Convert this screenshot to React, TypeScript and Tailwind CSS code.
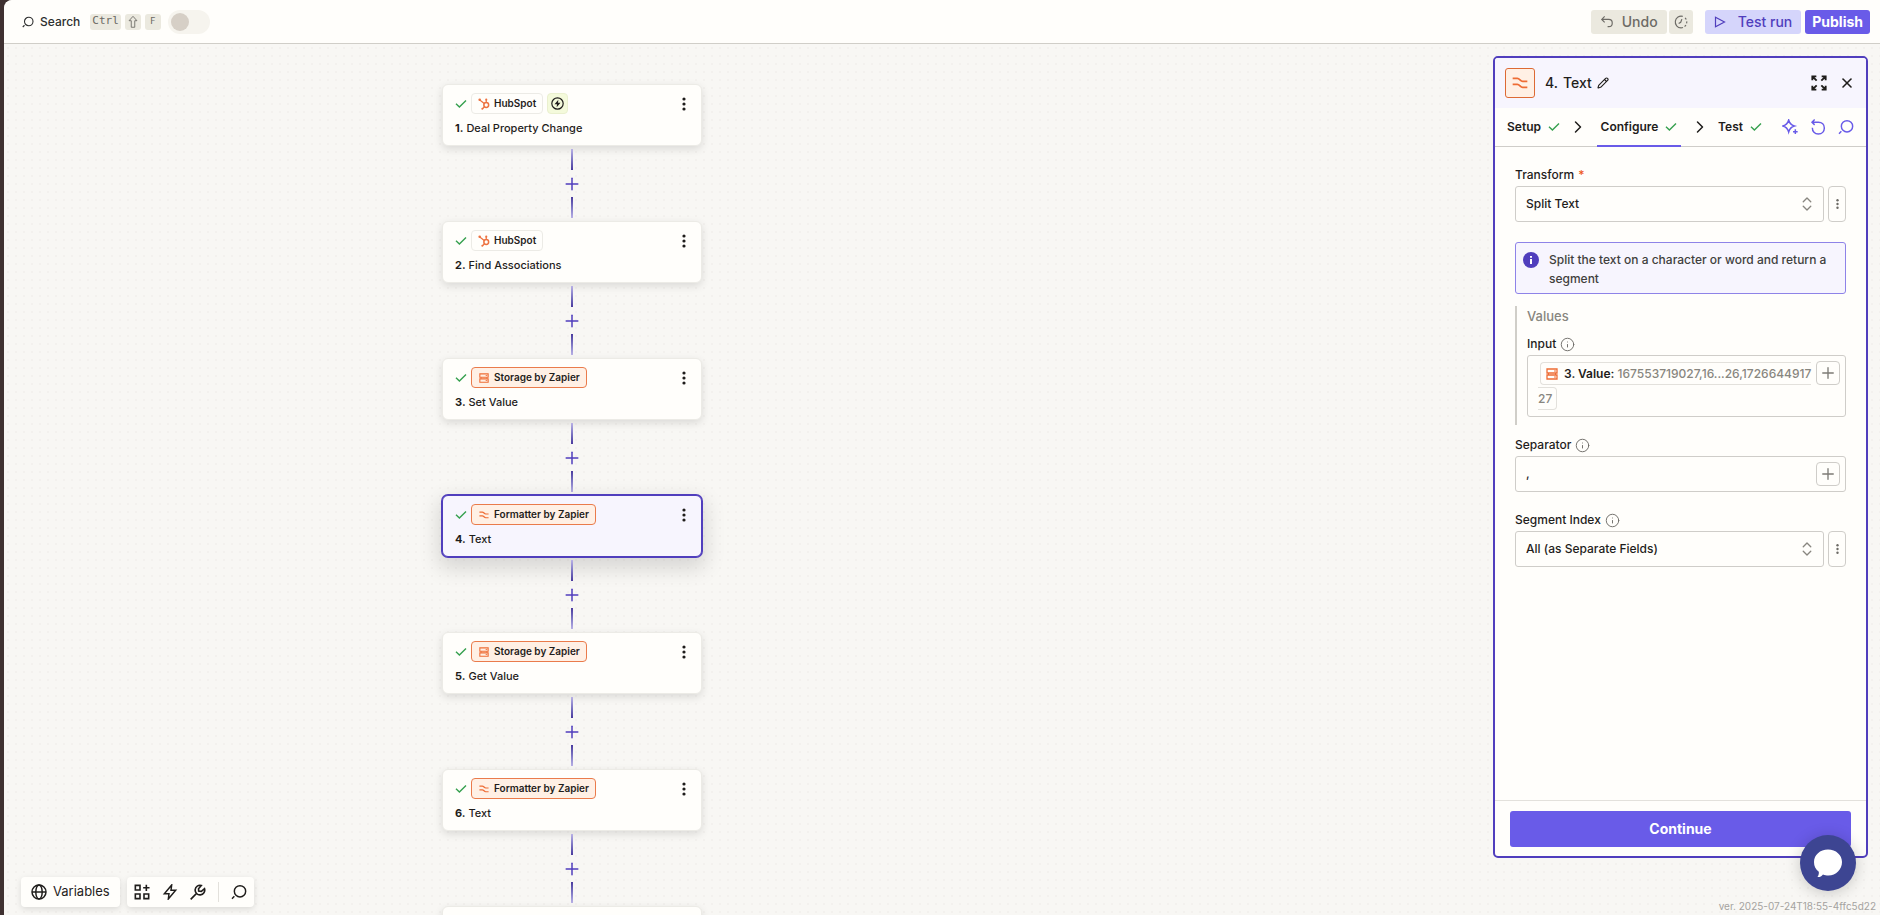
import { ChevronRight, ChevronsUpDown, Info, Pencil, Plus, X } from "lucide-react";

type App = "hubspot" | "storage" | "formatter" | "code";

interface Step {
  app: App;
  title: string;
  trigger?: boolean;
  selected?: boolean;
}

const steps: Step[] = [
  { app: "hubspot", title: "Deal Property Change", trigger: true },
  { app: "hubspot", title: "Find Associations" },
  { app: "storage", title: "Set Value" },
  { app: "formatter", title: "Text", selected: true },
  { app: "storage", title: "Get Value" },
  { app: "formatter", title: "Text" },
  { app: "code", title: "Run Javascript" },
];

const appNames: Record<App, string> = {
  hubspot: "HubSpot",
  storage: "Storage by Zapier",
  formatter: "Formatter by Zapier",
  code: "Code by Zapier",
};

interface IconProps {
  className?: string;
}

function CheckIcon({ className }: IconProps) {
  return (
    <svg viewBox="0 0 12 12" fill="none" stroke="#36a04f" strokeWidth="1.4" className={className} aria-hidden="true">
      <path d="M1 5.7 L4.4 9.1 L11 2.5" />
    </svg>
  );
}

function SearchIcon({ className }: IconProps) {
  return (
    <svg viewBox="0 0 24 24" fill="none" stroke="currentColor" strokeWidth="2.2" className={className} aria-hidden="true">
      <circle cx="13.5" cy="11" r="8.5" />
      <path d="M5 18.5 L1.5 22" />
    </svg>
  );
}

function HubSpotIcon({ className }: IconProps) {
  return (
    <svg viewBox="0 0 24 24" fill="none" stroke="currentColor" strokeWidth="2.4" className={className} aria-hidden="true">
      <circle cx="16.5" cy="14" r="4.8" strokeWidth="3" />
      <path d="M16.5 9 V4 M12.5 11 L3.5 4 M13 17.5 L9 21.5" />
      <circle cx="16.5" cy="3.4" r="2.2" fill="currentColor" stroke="none" />
      <circle cx="3.4" cy="3.4" r="2.6" fill="currentColor" stroke="none" />
      <circle cx="8.6" cy="21.6" r="2" fill="currentColor" stroke="none" />
    </svg>
  );
}

function StorageIcon({ className }: IconProps) {
  return (
    <svg viewBox="0 0 24 24" fill="none" stroke="currentColor" strokeWidth="2.6" className={className} aria-hidden="true">
      <path d="M2 2 H22 V10 H2 Z M2 14 H22 V22 H2 Z" />
      <path d="M16 6 H20 M16 18 H20 M5 10 V14 M19 10 V14" strokeWidth="2" />
    </svg>
  );
}

function FormatterIcon({ className }: IconProps) {
  return (
    <svg viewBox="0 0 24 24" fill="none" stroke="currentColor" strokeWidth="2.8" className={className} aria-hidden="true">
      <path d="M1 5 H8 C11.5 5 12.5 9.5 16 9.5 H23" />
      <path d="M1 14 H8 C11.5 14 12.5 18.5 16 18.5 H23" />
    </svg>
  );
}

function CodeIcon({ className }: IconProps) {
  return (
    <svg viewBox="0 0 24 24" fill="none" stroke="currentColor" strokeWidth="2.6" className={className} aria-hidden="true">
      <path d="M7 5 L1.5 12 L7 19 M17 5 L22.5 12 L17 19 M14 3 L10 21" />
    </svg>
  );
}

function AppIcon({ app, className }: IconProps & { app: App }) {
  if (app === "hubspot") return <HubSpotIcon className={className} />;
  if (app === "storage") return <StorageIcon className={className} />;
  if (app === "code") return <CodeIcon className={className} />;
  return <FormatterIcon className={className} />;
}

function DotsIcon({ className }: IconProps) {
  return (
    <svg viewBox="0 0 4 14" fill="currentColor" className={className} aria-hidden="true">
      <circle cx="2" cy="2" r="1.6" />
      <circle cx="2" cy="7" r="1.6" />
      <circle cx="2" cy="12" r="1.6" />
    </svg>
  );
}

function StepCard({ step, index }: { step: Step; index: number }) {
  return (
    <article
      className={
        step.selected
          ? "h-[62px] w-[260px] rounded-md border border-[#503ebd] bg-[#f7f5fe] pt-2 pr-[11px] pl-3 shadow-[0_8px_20px_4px_rgba(0,0,0,0.13)] ring-1 ring-[#503ebd]"
          : "h-[62px] w-[260px] rounded-md border border-[#ecebe6] bg-[#fffefb] pt-2 pr-[11px] pl-3 shadow-[0_3px_8px_rgba(0,0,0,0.12)]"
      }
    >
      <div className="flex items-center">
        <CheckIcon className="mr-1 size-3" />
        <span
          className={
            step.app === "hubspot"
              ? "flex h-[21px] items-center gap-1 rounded border border-[#ecebe6] px-1.5 text-[10px] font-semibold"
              : "flex h-[21px] items-center gap-1 rounded border border-[#ea7b4b] bg-[#fff0e5] px-1.5 text-[10px] font-semibold"
          }
        >
          <AppIcon app={step.app} className={step.app === "hubspot" ? "size-3 text-[#ed7240]" : "size-3 p-px text-[#ee6c35]"} />
          {appNames[step.app]}
        </span>
        {step.trigger && (
          <span className="ml-1 flex size-[21px] items-center justify-center rounded border border-[#eaf0cf] bg-[#f4fadb]">
            <svg viewBox="0 0 24 24" fill="none" className="size-[13px]" aria-hidden="true">
              <circle cx="12" cy="12" r="10.5" stroke="currentColor" strokeWidth="2.2" />
              <path d="M13.5 5 L6.5 13.2 H11 L10.5 19 L17.5 10.8 H13 Z" fill="currentColor" />
            </svg>
          </span>
        )}
        <button aria-label={`Step ${index} options`} className="ml-auto flex h-5 w-3 items-center justify-center">
          <DotsIcon className="h-[14px] w-1" />
        </button>
      </div>
      <h2 className="mt-1 text-[11px] leading-5 font-medium">
        <b className="font-bold">{index}.</b> {step.title}
      </h2>
    </article>
  );
}

function Connector() {
  return (
    <div className="flex h-[75px] flex-col items-center justify-between py-[3px]">
      <div className="h-[21px] w-0.5 bg-linear-to-b from-[#b9b1e6] to-[#4a3a9e]" />
      <button aria-label="Add step" className="text-[#503ebd]">
        <Plus className="size-5" strokeWidth={1.8} />
      </button>
      <div className="h-[21px] w-0.5 bg-linear-to-t from-[#b9b1e6] to-[#4a3a9e]" />
    </div>
  );
}

function TopBar() {
  return (
    <header className="flex h-11 items-center rounded-tl-lg border-b border-[#d0cec8] bg-[#fffefb] pr-2.5 pl-[18px]">
      <button className="flex items-center gap-1.5 text-xs font-medium text-[#2d2e2e]">
        <SearchIcon className="size-3" />
        Search
      </button>
      <div className="ml-2.5 flex gap-1 text-[#6b6963]">
        <kbd className="flex h-4 items-center rounded-[3px] bg-[#ebe9df] px-0.5 font-['DejaVu_Sans_Mono',monospace] text-[11px]">Ctrl</kbd>
        <kbd className="flex size-4 items-center justify-center rounded-[3px] bg-[#ebe9df]">
          <svg viewBox="0 0 12 16" fill="none" stroke="currentColor" className="h-[14px] w-3" aria-label="Shift">
            <path d="M6 1.5 L10.5 6.5 H8 V14 H4 V6.5 H1.5 Z" />
          </svg>
        </kbd>
        <kbd className="flex size-4 items-center justify-center rounded-[3px] bg-[#ebe9df] font-['DejaVu_Sans_Mono',monospace] text-[9px]">F</kbd>
      </div>
      <button role="switch" aria-checked="false" aria-label="Publish Zap" className="ml-[7px] h-6 w-[42px] rounded-full bg-[#f6f4ee] p-[3px]">
        <span className="block size-[18px] rounded-full bg-[#d6cfc6]" />
      </button>

      <div className="ml-auto flex items-center text-sm">
        <button className="flex h-6 items-center gap-2 rounded-[3px] bg-[#ebe9df] px-[9px] font-medium text-[#6d6b66]">
          <svg viewBox="0 0 24 24" fill="none" stroke="currentColor" strokeWidth="2" className="size-[14px]" aria-hidden="true">
            <path d="M8 2.5 L3 7.5 L8 12.5 M3 7.5 H15 C18.5 7.5 21 10 21 13.5 S18.5 20 15 20 H13" />
          </svg>
          Undo
        </button>
        <button aria-label="History" className="ml-0.5 flex size-6 items-center justify-center rounded-[3px] bg-[#ebe9df] text-[#6d6b66]">
          <svg viewBox="0 0 24 24" fill="none" stroke="currentColor" strokeWidth="2" className="size-[14px]" aria-hidden="true">
            <path d="M15 2.4 A10 10 0 1 0 12 22" />
            <path d="M12 22 A10 10 0 0 0 19 5" strokeDasharray="3.5 3" />
            <path d="M13.5 7 L11.5 12.5 L8 14.5" />
          </svg>
        </button>
        <button className="ml-3 flex h-6 items-center gap-3 rounded-[3px] bg-[#d5d5fb] px-[9px] font-medium text-[#503ebd]">
          <svg viewBox="0 0 24 24" fill="none" stroke="currentColor" strokeWidth="2.4" className="size-3" aria-hidden="true">
            <path d="M3 2.5 L21 12 L3 21.5 Z" />
          </svg>
          Test run
        </button>
        <button className="ml-1 h-6 rounded-[3px] bg-[#695be8] px-[7px] font-bold text-white">Publish</button>
      </div>
    </header>
  );
}

function SelectField({ id, label, value, children }: { id: string; label: string; value: string; children?: React.ReactNode }) {
  return (
    <div className="flex flex-col gap-0.5">
      <label htmlFor={id} className="flex items-center gap-1 text-xs leading-[18px] font-medium">
        {label}
        {children}
      </label>
      <div className="flex gap-1">
        <div className="relative flex-1">
          <select id={id} className="h-9 w-full appearance-none rounded-[3px] border border-[#cfcdc9] bg-transparent px-2.5 text-xs font-medium">
            <option>{value}</option>
          </select>
          <ChevronsUpDown className="pointer-events-none absolute top-[9px] right-2 size-[18px] text-[#88867f]" strokeWidth={1.8} />
        </div>
        <button aria-label={`${label} options`} className="flex w-[18px] items-center justify-center rounded border border-[#cfcdc9] text-[#6d6b66]">
          <DotsIcon className="h-[14px] w-[3px]" />
        </button>
      </div>
    </div>
  );
}

function InfoIcon() {
  return <Info className="size-[15px] text-[#6d6b66]" strokeWidth={1.5} />;
}

function InsertButton({ label }: { label: string }) {
  return (
    <button aria-label={label} className="flex size-6 shrink-0 items-center justify-center rounded border border-[#cfcdc9] text-[#7d7b76]">
      <Plus className="size-[18px]" strokeWidth={1.8} />
    </button>
  );
}

function StepPanel() {
  return (
    <aside className="mt-3 mr-3 mb-[57px] flex w-[375px] shrink-0 flex-col overflow-hidden rounded-[5px] border-2 border-[#503ebd] bg-[#fffefb]">
      <div className="flex h-[50px] shrink-0 items-center bg-[#f7f5fe] pr-[11px] pl-2.5">
        <span className="flex size-[30px] items-center justify-center rounded-[3px] border border-[#dd6a35] bg-[#fff0e5] text-[#ee6c35]">
          <FormatterIcon className="size-4" />
        </span>
        <h1 className="ml-2.5 flex gap-[5px] text-sm font-medium">
          <span>4.</span> Text
        </h1>
        <button aria-label="Rename step" className="ml-[5px]">
          <Pencil className="size-3" strokeWidth={2.2} />
        </button>
        <button aria-label="Expand" className="ml-auto">
          <svg viewBox="0 0 24 24" fill="none" stroke="currentColor" strokeWidth="2.8" className="size-4" aria-hidden="true">
            <path d="M2 8 V2 H8 M2 2 L8.5 8.5 M16 2 H22 V8 M22 2 L15.5 8.5 M2 16 V22 H8 M2 22 L8.5 15.5 M22 16 V22 H16 M22 22 L15.5 15.5" />
          </svg>
        </button>
        <button aria-label="Close" className="ml-3">
          <X className="size-4" strokeWidth={2.4} />
        </button>
      </div>

      <nav className="flex h-[39px] shrink-0 items-center border-b border-[#cfcdc9] px-3 text-xs font-semibold">
        <button className="flex items-center gap-[7px]">
          Setup <CheckIcon className="size-3" />
        </button>
        <ChevronRight className="mx-auto size-5" strokeWidth={1.8} />
        <button className="flex h-[39px] items-center gap-[7px] border-b-2 border-[#695be8] px-1 pt-0.5">
          Configure <CheckIcon className="size-3" />
        </button>
        <ChevronRight className="mx-auto size-5" strokeWidth={1.8} />
        <button className="flex items-center gap-[7px]">
          Test <CheckIcon className="size-3" />
        </button>
        <div className="ml-5 flex items-center gap-3 text-[#695be8]">
          <button aria-label="Copilot">
            <svg viewBox="0 0 24 24" fill="none" stroke="currentColor" strokeWidth="2.2" className="size-4" aria-hidden="true">
              <path d="M10 1.5 C11.5 7 13 9 18.5 10.5 C13 12 11.5 14 10 19.5 C8.5 14 7 12 1.5 10.5 C7 9 8.5 7 10 1.5 Z M20 15.5 V22.5 M16.5 19 H23.5" />
            </svg>
          </button>
          <button aria-label="Reset">
            <svg viewBox="0 0 24 24" fill="none" stroke="currentColor" strokeWidth="2.2" className="size-4" aria-hidden="true">
              <path d="M7 0.8 L3 4.8 L7 8.8 M3.5 4.8 H12.5 C18 4.8 21.5 8.5 21.5 13.5 S18 22.5 12.5 22.5 S3.5 18.5 3.5 13" />
            </svg>
          </button>
          <button aria-label="Search fields">
            <SearchIcon className="size-4" />
          </button>
        </div>
      </nav>

      <div className="flex-1 overflow-hidden px-5 pt-[19px]">
        <SelectField id="transform" label="Transform" value="Split Text">
          <span className="text-[#ee5a1f]">*</span>
        </SelectField>

        <div className="mt-5 flex gap-2.5 rounded-[3px] border border-[#8e83e8] bg-[#f7f5fe] pt-[7px] pr-1.5 pb-[5px] pl-[7px]">
          <svg viewBox="0 0 16 16" className="mt-0.5 size-4 shrink-0" aria-hidden="true">
            <circle cx="8" cy="8" r="8" fill="#503ebd" />
            <path d="M7 4 H9 V5.7 H7 Z M7 7 H9 V12 H7 Z" fill="#fff" />
          </svg>
          <p className="text-xs leading-[19px] font-medium text-[#413f3d]">Split the text on a character or word and return a segment</p>
        </div>

        <fieldset className="mt-3 border-l-2 border-[#d0cec8] pb-2 pl-2.5">
          <div className="text-[13px] leading-5 font-medium text-[#88867f]">Values</div>
          <div id="input-label" className="mt-[9px] flex items-center gap-1 text-xs leading-[18px] font-medium">
            Input <InfoIcon />
          </div>
          <div className="mt-0.5 flex h-[62px] items-start rounded-[3px] border border-[#cfcdc9] pt-[5px] pr-[5px] pl-2.5">
            <div role="textbox" aria-labelledby="input-label" tabIndex={0} className="mr-1 flex-1 text-xs leading-[25px] break-all">
              <span className="ml-0.5 rounded border border-[#e3e1dc] py-[3px] pr-1 pl-[5px] font-medium text-[#88867f]">
                <StorageIcon className="mr-1.5 inline size-3 align-[-2px] text-[#ee6c35]" />
                <b className="font-semibold text-[#1f1d1b]">3. Value:</b> 167553719027,16...26,172664491727
              </span>
            </div>
            <InsertButton label="Insert data in Input" />
          </div>
        </fieldset>

        <div className="mt-[11px] flex flex-col gap-0.5">
          <label htmlFor="separator" className="flex items-center gap-1 text-xs leading-[18px] font-medium">
            Separator <InfoIcon />
          </label>
          <div className="flex h-9 items-center rounded-[3px] border border-[#cfcdc9] pr-[5px] pl-2.5">
            <input id="separator" defaultValue="," className="min-w-0 flex-1 bg-transparent text-xs font-medium outline-none" />
            <InsertButton label="Insert data in Separator" />
          </div>
        </div>

        <div className="mt-[19px]">
          <SelectField id="segment-index" label="Segment Index" value="All (as Separate Fields)">
            <InfoIcon />
          </SelectField>
        </div>
      </div>

      <footer className="border-t border-[#e3e1dc] px-[15px] pt-2.5 pb-[9px]">
        <button className="h-9 w-full rounded-[3px] bg-[#695be8] text-sm font-bold text-white">Continue</button>
      </footer>
    </aside>
  );
}

function BottomTools() {
  return (
    <div className="absolute bottom-2 left-[17px] flex gap-[7px]">
      <button className="flex h-[30px] items-center gap-1.5 rounded bg-[#fffefb] px-2.5 text-[13px] shadow-[0_2px_6px_rgba(0,0,0,0.12)]">
        <svg viewBox="0 0 24 24" fill="none" stroke="currentColor" strokeWidth="2.2" className="size-4" aria-hidden="true">
          <circle cx="12" cy="12" r="10.5" />
          <ellipse cx="12" cy="12" rx="4.8" ry="10.5" />
          <path d="M1.5 12 H22.5" />
        </svg>
        Variables
      </button>
      <div className="flex h-[30px] items-center rounded bg-[#fffefb] px-[7px] shadow-[0_2px_6px_rgba(0,0,0,0.12)]">
        <button aria-label="Apps">
          <svg viewBox="0 0 24 24" fill="none" stroke="currentColor" strokeWidth="2.4" className="size-4" aria-hidden="true">
            <path d="M2 2 H9 V9 H2 Z M2 15 H9 V22 H2 Z M15 15 H22 V22 H15 Z M18.5 1 V10.5 M13.7 5.7 H23.3" />
          </svg>
        </button>
        <button aria-label="Zap runs" className="ml-3">
          <svg viewBox="0 0 24 24" fill="none" stroke="currentColor" strokeWidth="2.2" className="size-4" aria-hidden="true">
            <path d="M14.5 1.5 L3.5 14.5 H10.5 L9.5 22.5 L20.5 9.5 H13.5 Z" />
          </svg>
        </button>
        <button aria-label="Tools" className="ml-3">
          <svg viewBox="0 0 24 24" fill="none" stroke="currentColor" strokeWidth="2.4" className="size-4" aria-hidden="true">
            <path d="M1 23 L9.5 14.5 M17 2.2 A7.2 7.2 0 1 0 21.8 7 L17 11 L13 10.5 L12.8 7 Z" />
          </svg>
        </button>
        <span className="mx-3 h-5 w-px bg-[#e3e1dc]" />
        <button aria-label="Search canvas">
          <SearchIcon className="size-4" />
        </button>
      </div>
    </div>
  );
}

export default function App() {
  return (
    <div className="h-screen bg-[#3f3131] pl-1 font-['Inter',sans-serif] text-[#1f1d1b]">
      <div className="relative flex h-full flex-col overflow-hidden rounded-tl-lg bg-[#f8f7f4]">
        <TopBar />
        <main className="flex min-h-0 flex-1 bg-[radial-gradient(circle,#f3f1ee_1px,transparent_1px)] bg-size-[8px_8px]">
          <div className="flex min-w-0 flex-1 overflow-hidden pt-10 pl-[438px]">
            <div className="flex flex-col items-center">
              {steps.map((step, i) => (
                <div key={i} className="flex flex-col items-center">
                  {i > 0 && <Connector />}
                  <StepCard step={step} index={i + 1} />
                </div>
              ))}
            </div>
          </div>
          <StepPanel />
        </main>
        <BottomTools />
        <small className="absolute right-1 bottom-0.5 text-[10px] leading-[14px] text-[#a5a3a0]">ver. 2025-07-24T18:55-4ffc5d22</small>
        <button
          aria-label="Open chat"
          className="absolute right-6 bottom-6 flex size-14 items-center justify-center rounded-full bg-[#3d4592] text-white shadow-[0_2px_16px_rgba(0,0,0,0.2)]"
        >
          <svg viewBox="0 0 28 28" fill="currentColor" className="size-7" aria-hidden="true">
            <path d="M14 0.5 C22 0.5 28 6 28 13 C28 20.5 22 26.5 14.5 26.5 C12.5 26.5 10.5 26.2 9 25.5 C7.5 27.5 5.5 28.5 3 28.5 C4.5 27 5 25 4.8 22.8 C1.5 20.5 0 17 0 13 C0 6 6 0.5 14 0.5 Z" />
          </svg>
        </button>
      </div>
    </div>
  );
}
